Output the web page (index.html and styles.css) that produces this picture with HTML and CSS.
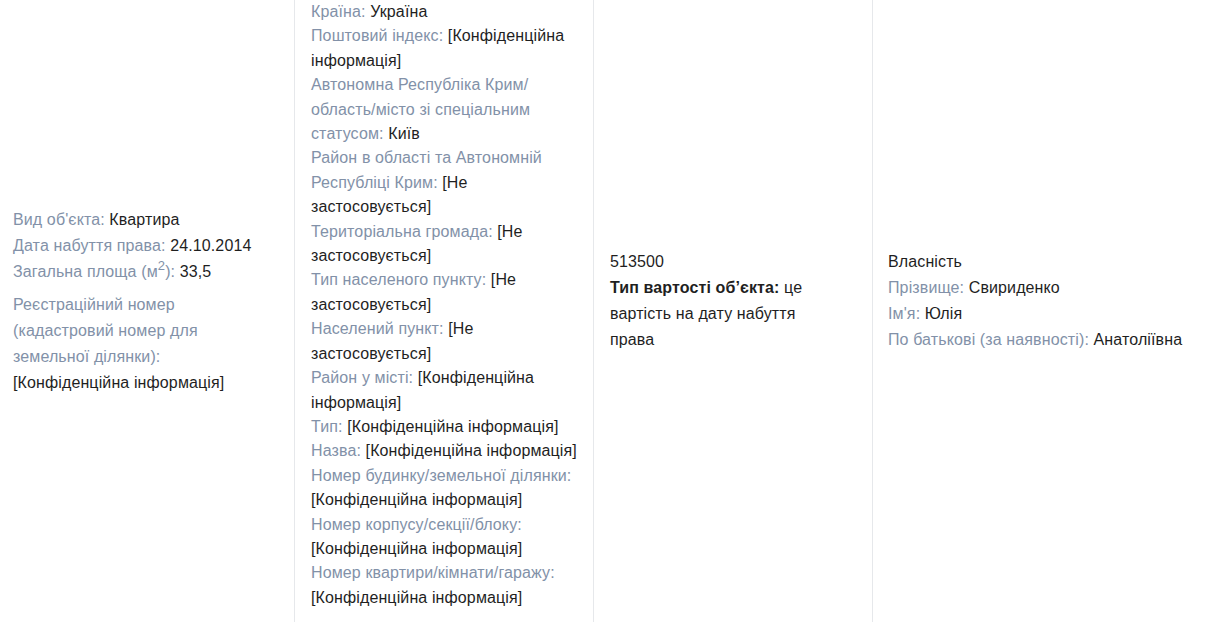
FILE: index.html
```html
<!DOCTYPE html>
<html lang="uk">
<head>
<meta charset="utf-8">
<title>Об'єкт</title>
<link rel="stylesheet" href="styles.css">
</head>
<body>
<div class="row">
  <div class="cell c1">
    <div class="line"><span class="lbl">Вид об'єкта:</span> Квартира</div>
    <div class="line"><span class="lbl">Дата набуття права:</span> 24.10.2014</div>
    <div class="line"><span class="lbl">Загальна площа (м<sup>2</sup>):</span> 33,5</div>
    <div class="line gap"><span class="lbl">Реєстраційний номер (кадастровий номер для земельної ділянки):</span> [Конфіденційна інформація]</div>
  </div>
  <div class="cell c2">
    <div><span class="lbl">Країна:</span> Україна</div>
    <div><span class="lbl">Поштовий індекс:</span> [Конфіденційна інформація]</div>
    <div><span class="lbl">Автономна Республіка Крим/ область/місто зі спеціальним статусом:</span> Київ</div>
    <div><span class="lbl">Район в області та Автономній Республіці Крим:</span> [Не застосовується]</div>
    <div><span class="lbl">Територіальна громада:</span> [Не застосовується]</div>
    <div><span class="lbl">Тип населеного пункту:</span> [Не застосовується]</div>
    <div><span class="lbl">Населений пункт:</span> [Не застосовується]</div>
    <div><span class="lbl">Район у місті:</span> [Конфіденційна інформація]</div>
    <div><span class="lbl">Тип:</span> [Конфіденційна інформація]</div>
    <div><span class="lbl">Назва:</span> [Конфіденційна інформація]</div>
    <div><span class="lbl">Номер будинку/земельної ділянки:</span> [Конфіденційна інформація]</div>
    <div><span class="lbl">Номер корпусу/секції/блоку:</span> [Конфіденційна інформація]</div>
    <div><span class="lbl">Номер квартири/кімнати/гаражу:</span> [Конфіденційна інформація]</div>
  </div>
  <div class="cell c3">
    <div class="line">513500</div>
    <div class="line"><b>Тип вартості об’єкта:</b> це вартість на дату набуття права</div>
  </div>
  <div class="cell c4">
    <div class="line">Власність</div>
    <div class="line"><span class="lbl">Прізвище:</span> Свириденко</div>
    <div class="line"><span class="lbl">Ім'я:</span> Юлія</div>
    <div class="line"><span class="lbl">По батькові (за наявності):</span> Анатоліївна</div>
  </div>
</div>
</body>
</html>
```
FILE: styles.css
```css
html, body {
  margin: 0;
  padding: 0;
  background: #ffffff;
  overflow: hidden;
}
body {
  font-family: "Liberation Sans", Arial, sans-serif;
  font-size: 16px;
  letter-spacing: 0.12px;
  color: #1f1f1f;
}
.row {
  display: grid;
  grid-template-columns: 295px 299px 279px 1fr;
  align-items: stretch;
  margin-top: -21px;
}
.cell {
  display: flex;
  flex-direction: column;
  justify-content: center;
  line-height: 26px;
}
.c1, .c2, .c3 {
  border-right: 1px solid #e6e8eb;
}
.c1 {
  padding: 0 37px 0 13px;
}
.c2 {
  padding: 21px 12px 13px 16px;
  line-height: 24.4px;
}
.c3 {
  padding: 0 33px 0 16px;
}
.c4 {
  padding: 0 20px 0 15px;
}
.lbl {
  color: #8291a8;
}
.gap {
  margin-top: 7px;
}
sup {
  font-size: 13px;
  line-height: 0;
  vertical-align: 7px;
}
b {
  font-weight: 700;
  color: #1f1f1f;
}
```
